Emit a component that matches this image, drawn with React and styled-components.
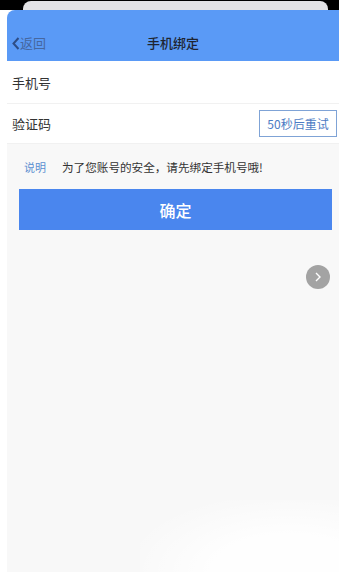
import React from "react";
import styled, { createGlobalStyle } from "styled-components";

const GlobalStyle = createGlobalStyle`
  html, body {
    margin: 0;
    padding: 0;
    background: #ffffff;
    font-family: "Noto Sans CJK SC", "Noto Sans", sans-serif;
  }
`;

const Page = styled.div`
  width: 339px;
  height: 572px;
  display: flex;
  flex-direction: column;
  background: #ffffff;
  overflow: hidden;
  position: relative;
`;

const TopStrip = styled.div`
  height: 10px;
  background: #000000;
  display: flex;
  align-items: flex-end;
  padding: 0 11px 0 23px;
`;

const BehindCard = styled.div`
  flex: 1;
  height: 9px;
  background: #e3e3e6;
  border-radius: 8px 8px 0 0;
`;

const Sheet = styled.div`
  flex: 1;
  margin-left: 7px;
  display: flex;
  flex-direction: column;
  background: #f8f8f8;
  border-top-left-radius: 8px;
  overflow: hidden;
  position: relative;
`;

const NavBar = styled.div`
  height: 51px;
  background: #5a9af6;
  display: grid;
  grid-template-columns: 1fr auto 1fr;
  align-items: end;
  padding: 0 5px 9px 5px;
  box-sizing: border-box;
`;

const Back = styled.div`
  display: flex;
  align-items: center;
  font-size: 13px;
  color: #46679f;
  line-height: 18px;
`;

const Title = styled.div`
  font-size: 13px;
  font-weight: 500;
  color: #1e2430;
  line-height: 18px;
`;

const Row = styled.div`
  height: ${(p) => p.$h}px;
  background: #ffffff;
  display: flex;
  align-items: center;
  justify-content: space-between;
  padding: 0 2px 0 5px;
  border-bottom: 1px solid #f1f1f1;
  box-sizing: border-box;
`;

const Label = styled.span`
  font-size: 13px;
  color: #333333;
`;

const RetryButton = styled.div`
  width: 78px;
  height: 27px;
  box-sizing: border-box;
  border: 1px solid #7fa3d6;
  display: flex;
  align-items: center;
  justify-content: center;
  font-size: 12px;
  color: #4d7cc4;
`;

const Notice = styled.div`
  display: flex;
  align-items: center;
  gap: 16px;
  padding: 14px 0 0 17px;
  height: 18px;
`;

const NoticeTag = styled.span`
  font-size: 11px;
  color: #5b8fd0;
`;

const NoticeText = styled.span`
  font-size: 11.6px;
  color: #333333;
`;

const Confirm = styled.div`
  margin: 13px 7px 0 12px;
  height: 41px;
  background: #4a86ee;
  display: flex;
  align-items: center;
  justify-content: center;
  font-size: 16px;
  color: #ffffff;
  font-weight: 500;
`;

const FloatCircle = styled.div`
  position: absolute;
  left: 299px;
  top: 255px;
  width: 24px;
  height: 24px;
  border-radius: 50%;
  background: #a3a3a3;
  display: flex;
  align-items: center;
  justify-content: center;
`;

const Glare = styled.div`
  position: absolute;
  left: 133px;
  top: 490px;
  right: 0;
  bottom: 0;
  background: radial-gradient(ellipse at 75% 100%, rgba(255,255,255,0.9) 35%, rgba(255,255,255,0) 80%);
  pointer-events: none;
`;

export default function App() {
  return (
    <>
      <GlobalStyle />
      <Page>
        <TopStrip>
          <BehindCard />
        </TopStrip>
        <Sheet>
          <NavBar>
            <Back>
              <svg width="8" height="13" viewBox="0 0 8 13">
                <path d="M6.5 1 L1.5 6.5 L6.5 12" fill="none" stroke="#2e4d85" strokeWidth="2" />
              </svg>
              返回
            </Back>
            <Title>手机绑定</Title>
            <div />
          </NavBar>
          <Row $h={43}>
            <Label>手机号</Label>
          </Row>
          <Row $h={40}>
            <Label>验证码</Label>
            <RetryButton>50秒后重试</RetryButton>
          </Row>
          <Notice>
            <NoticeTag>说明</NoticeTag>
            <NoticeText>为了您账号的安全，请先绑定手机号哦!</NoticeText>
          </Notice>
          <Confirm>确定</Confirm>
          <FloatCircle>
            <svg width="8" height="10" viewBox="0 0 8 10">
              <path d="M2 1 L6 5 L2 9" fill="none" stroke="#ffffff" strokeWidth="1.4" />
            </svg>
          </FloatCircle>
          <Glare />
        </Sheet>
      </Page>
    </>
  );
}
